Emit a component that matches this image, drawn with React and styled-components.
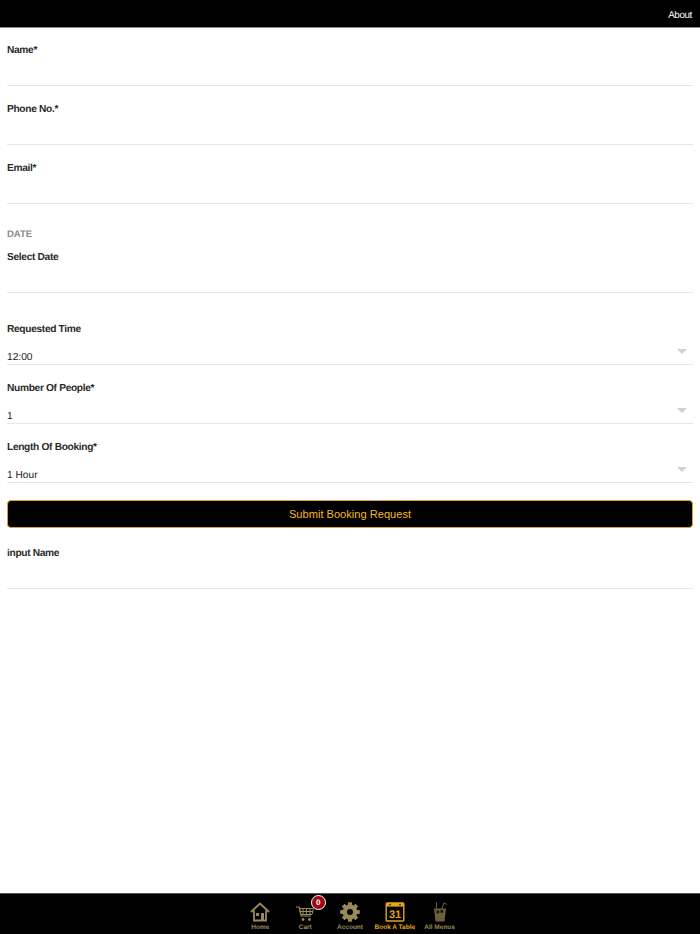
import React from "react";
import styled, { createGlobalStyle } from "styled-components";

const Global = createGlobalStyle`
  html, body { margin: 0; padding: 0; background: #fff; }
  body { font-family: "Liberation Sans", Arial, sans-serif; color: #222; text-rendering: geometricPrecision; }
  * { box-sizing: border-box; }
`;

const Page = styled.div`
  width: 700px;
  height: 934px;
  display: flex;
  flex-direction: column;
  overflow: hidden;
`;
const TopBar = styled.header`
  height: 28px;
  flex: none;
  background: #000;
  border-bottom: 1px solid #8a8a8a;
  display: flex;
  align-items: center;
  justify-content: flex-end;
  padding: 3px 8px 0 0;
`;
const TopLink = styled.span`
  color: #fff;
  font-size: 9.8px;
  letter-spacing: -0.35px;
`;
const Form = styled.main`
  flex: 1;
  padding: 0 7px;
  display: flex;
  flex-direction: column;
`;
const Field = styled.div`
  height: ${(p) => p.$height || 59}px;
  padding-top: ${(p) => p.$top ?? 16}px;
  margin-top: ${(p) => p.$gap || 0}px;
  border-bottom: 1px solid #e6e6e6;
  position: relative;
  flex: none;
`;
const Label = styled.label`
  display: block;
  font-size: 10.2px;
  font-weight: 700;
  letter-spacing: -0.33px;
  line-height: 16px;
  color: #2a2a2a;
`;
const Value = styled.div`
  font-size: 10.2px;
  line-height: 16px;
  margin-top: 12px;
  color: #1a1a1a;
`;
const Caret = styled.span`
  position: absolute;
  right: 6px;
  top: 43px;
  width: 0;
  height: 0;
  border-left: 5.5px solid transparent;
  border-right: 5.5px solid transparent;
  border-top: 5px solid #d0d0d0;
`;
const SectionTitle = styled.div`
  height: 37px;
  flex: none;
  padding-top: 24px;
  font-size: 9.5px;
  font-weight: 700;
  line-height: 13px;
  color: #8a8a8a;
`;
const Submit = styled.button`
  height: 28px;
  flex: none;
  margin: 17px 0 2px;
  border: 1px solid #d9a520;
  border-radius: 4px;
  background: #000;
  color: #f5b81f;
  font-family: inherit;
  font-size: 11.1px;
  padding: 0;
`;
const TabBar = styled.nav`
  height: 41px;
  flex: none;
  background: #000;
  border-top: 1px solid #555;
  display: flex;
  justify-content: center;
`;
const Tab = styled.div`
  width: 44.8px;
  display: flex;
  flex-direction: column;
  align-items: center;
  position: relative;
  padding-top: 8px;
  color: ${(p) => (p.$active ? "#e5a51c" : "#9a8a5a")};
`;
const TabIcon = styled.svg`
  width: 20px;
  height: 20px;
  flex: none;
  display: block;
`;
const TabText = styled.span`
  font-size: 6.5px;
  font-weight: 700;
  line-height: 8px;
  margin-top: 2px;
  white-space: nowrap;
`;
const Badge = styled.span`
  position: absolute;
  left: 28px;
  top: 1px;
  width: 15px;
  height: 15px;
  border-radius: 50%;
  background: #9c0a14;
  border: 1.5px solid #fff;
  color: #fff;
  font-size: 8px;
  font-weight: 700;
  display: flex;
  align-items: center;
  justify-content: center;
`;

const HomeIcon = () => (
  <TabIcon viewBox="0 0 20 20">
    <path d="M1.5 9.5 10 1.5 18.5 9.5" fill="none" stroke="currentColor" strokeWidth="1.9" strokeLinecap="round" />
    <path d="M4 8.5V18.5h12V8.5" fill="none" stroke="currentColor" strokeWidth="1.8" />
    <rect x="11" y="11" width="3" height="7.5" fill="currentColor" />
    <rect x="6" y="11" width="3" height="3" fill="currentColor" />
  </TabIcon>
);
const CartIcon = () => (
  <TabIcon viewBox="0 0 20 20">
    <path d="M1 5h3l2 9h10" fill="none" stroke="currentColor" strokeWidth="1.1" />
    <path d="M4.5 6.5h14l-1.5 6H6z M8 6.5v6 M11.5 6.5v6 M15 6.5v6 M5 9.5h13" fill="none" stroke="currentColor" strokeWidth="1" />
    <circle cx="8" cy="17.5" r="1.4" fill="currentColor" />
    <circle cx="14.5" cy="17.5" r="1.4" fill="currentColor" />
  </TabIcon>
);
const GearIcon = () => (
  <TabIcon viewBox="0 0 20 20">
    <g fill="currentColor">
      {[0, 45, 90, 135, 180, 225, 270, 315].map((a) => (
        <rect key={a} x="8.2" y="0.5" width="3.6" height="19" transform={`rotate(${a} 10 10)`} />
      ))}
    </g>
    <circle cx="10" cy="10" r="5.6" fill="none" stroke="currentColor" strokeWidth="3.6" />
    <circle cx="10" cy="10" r="3" fill="#000" />
  </TabIcon>
);
const CalendarIcon = () => (
  <TabIcon viewBox="0 0 20 20">
    <rect x="1.2" y="1" width="17.6" height="18" rx="1" fill="#000" stroke="currentColor" strokeWidth="1.4" />
    <rect x="1.2" y="1" width="17.6" height="3.6" fill="currentColor" />
    <circle cx="5" cy="2.8" r="0.8" fill="#000" />
    <circle cx="15" cy="2.8" r="0.8" fill="#000" />
    <text x="10" y="16" textAnchor="middle" fontFamily="Liberation Sans, sans-serif" fontWeight="700" fontSize="11" fill="currentColor">31</text>
  </TabIcon>
);
const DrinkIcon = () => (
  <TabIcon viewBox="0 0 20 20">
    <path d="M4 6.5h12L14.5 19.5h-9z" fill="currentColor" opacity="0.7" />
    <path d="M6.5 0.5v6M12 6.5 14 1l3 1.5" fill="none" stroke="currentColor" strokeWidth="0.7" />
    <rect x="6.5" y="8.5" width="2.8" height="2.8" fill="#000" opacity="0.75" />
    <rect x="10.4" y="8" width="2.8" height="2.8" fill="#000" opacity="0.75" />
  </TabIcon>
);

const tabs = [
  { name: "Home", Icon: HomeIcon },
  { name: "Cart", Icon: CartIcon, badge: "0" },
  { name: "Account", Icon: GearIcon },
  { name: "Book A Table", Icon: CalendarIcon, active: true },
  { name: "All Menus", Icon: DrinkIcon },
];

export default function App() {
  return (
    <Page>
      <Global />
      <TopBar>
        <TopLink>About</TopLink>
      </TopBar>
      <Form>
        <Field $height={58} $top={15}><Label>Name*</Label></Field>
        <Field><Label>Phone No.*</Label></Field>
        <Field><Label>Email*</Label></Field>
        <SectionTitle>DATE</SectionTitle>
        <Field $height={52} $top={9}><Label>Select Date</Label></Field>
        <Field $gap={13}>
          <Label>Requested Time</Label>
          <Value>12:00</Value>
          <Caret />
        </Field>
        <Field>
          <Label>Number Of People*</Label>
          <Value>1</Value>
          <Caret />
        </Field>
        <Field>
          <Label>Length Of Booking*</Label>
          <Value>1 Hour</Value>
          <Caret />
        </Field>
        <Submit>Submit Booking Request</Submit>
        <Field><Label>input Name</Label></Field>
      </Form>
      <TabBar>
        {tabs.map(({ name, Icon, badge, active }) => (
          <Tab key={name} $active={active}>
            <Icon />
            <TabText>{name}</TabText>
            {badge && <Badge>{badge}</Badge>}
          </Tab>
        ))}
      </TabBar>
    </Page>
  );
}
